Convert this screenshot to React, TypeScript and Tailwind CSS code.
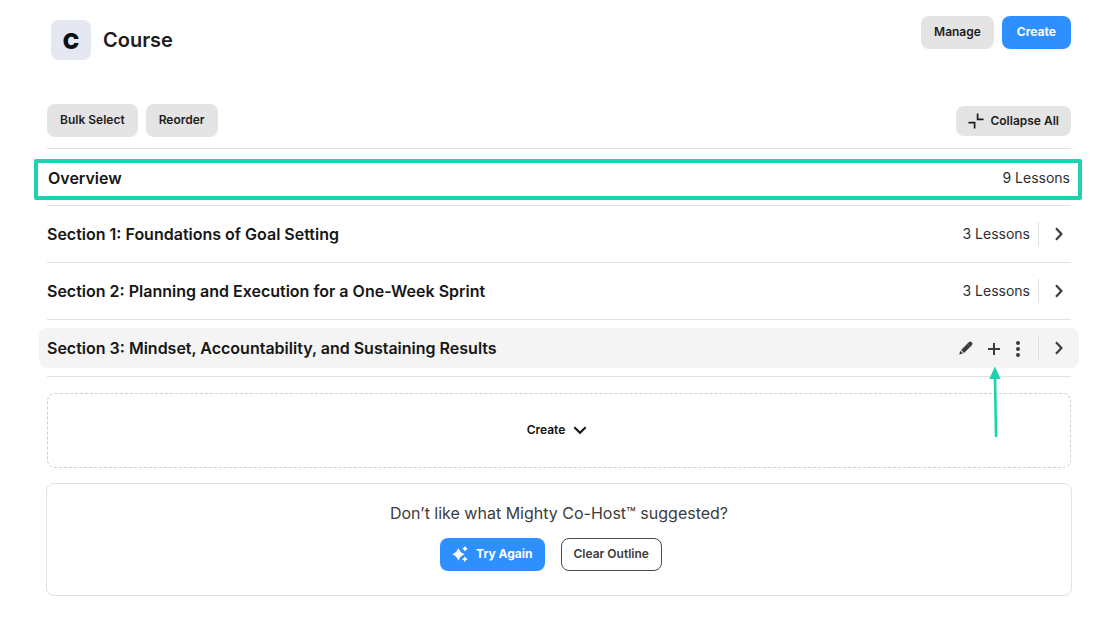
import React from "react";

const grayButton =
  "flex items-center justify-center rounded-lg bg-[#e4e4e4] text-xs font-semibold text-[#1c1c1c]";

function ChevronRight() {
  return (
    <svg viewBox="0 0 24 24" className="size-6" fill="none" stroke="#3c3c3c" strokeWidth="2.2" aria-hidden="true">
      <path d="M9 6.3l5.4 5.7L9 17.7" />
    </svg>
  );
}

function OpenButton({ label }: { label: string }) {
  return (
    <div className="ml-2 flex h-6 w-[33px] items-center justify-end border-l border-[#e0e0e0]">
      <button type="button" aria-label={label} className="size-6">
        <ChevronRight />
      </button>
    </div>
  );
}

const rowClass = "border-b border-[#e2e2e2] py-2";
const titleClass = "text-base font-semibold text-[#161616]";
const countClass = "text-sm text-[#2e2e2e]";

function SectionRow({ title, count }: { title: string; count: string }) {
  return (
    <li className={rowClass}>
      <div className="flex h-10 items-center">
        <h2 className={titleClass}>{title}</h2>
        <span className={`ml-auto ${countClass}`}>{count}</span>
        <OpenButton label={`Open ${title}`} />
      </div>
    </li>
  );
}

function ActiveSectionRow({ title }: { title: string }) {
  return (
    <li className={rowClass}>
      <div className="-mx-2 flex h-10 items-center rounded-lg bg-[#f4f4f4] px-2">
        <h2 className={titleClass}>{title}</h2>
        <div className="ml-auto flex items-center">
          <button type="button" aria-label="Edit" className="mr-1 size-6">
            <svg viewBox="0 0 24 24" className="size-6" fill="#3c3c3c" aria-hidden="true">
              <path d="M5.2 18.6l1.1-3.9 2.8 2.8z" />
              <path d="M8.4 15.7L15.8 8.2" stroke="#3c3c3c" strokeWidth="4.2" />
              <path d="M15.8 8.2l.5-.4" stroke="#3c3c3c" strokeWidth="4.2" strokeLinecap="round" />
              <path d="M6.6 13.9l3.4 3.4" stroke="#f4f4f4" strokeWidth=".7" />
              <path d="M13.4 7.8l2.8 2.8" stroke="#f4f4f4" strokeWidth=".4" opacity=".6" />
            </svg>
          </button>
          <div className="relative size-6">
            <button type="button" aria-label="Add" className="size-6">
              <svg viewBox="0 0 24 24" className="size-6" fill="none" stroke="#3c3c3c" strokeWidth="2" aria-hidden="true">
                <path d="M12 7v12M6 13h12" />
              </svg>
            </button>
            <svg viewBox="0 0 24 72" className="pointer-events-none absolute top-[30px] left-0 h-[72px] w-6" aria-hidden="true">
              <path d="M13 12L14 70" stroke="#1dd2ae" strokeWidth="2.6" strokeLinecap="round" />
              <path d="M12.9 .5L18.5 13H7.2z" fill="#1dd2ae" />
            </svg>
          </div>
          <button type="button" aria-label="More options" className="size-6">
            <svg viewBox="0 0 24 24" className="size-6" fill="#3c3c3c" aria-hidden="true">
              <circle cx="12" cy="7" r="2" />
              <circle cx="12" cy="13" r="2" />
              <circle cx="12" cy="19" r="2" />
            </svg>
          </button>
        </div>
        <OpenButton label={`Open ${title}`} />
      </div>
    </li>
  );
}

export default function App() {
  return (
    <div className="min-h-screen bg-white pt-4 pr-[43px] pb-6 pl-[47px] font-['Inter','Liberation_Sans',sans-serif]">
      <header className="flex items-start justify-between">
        <div className="flex items-center gap-3 pt-1 pl-1">
          <div className="flex size-10 items-center justify-center rounded-lg bg-[#e5e8f1] pt-0.5 text-[22px] font-black text-[#0d1117]">
            C
          </div>
          <h1 className="text-xl font-semibold text-[#1c1c1c]">Course</h1>
        </div>
        <div className="flex gap-2">
          <button type="button" className={`${grayButton} h-[33px] px-[13px] pb-0.5`}>Manage</button>
          <button
            type="button"
            className="h-[33px] rounded-lg bg-[#2e90ff] px-[15px] pb-0.5 text-xs font-bold text-white"
          >
            Create
          </button>
        </div>
      </header>

      <main>
        <div className="mt-11 flex items-center justify-between border-b border-[#e2e2e2] pb-[11px]">
          <div className="flex gap-2">
            <button type="button" className={`${grayButton} h-[33px] px-[13px] pb-0.5`}>Bulk Select</button>
            <button type="button" className={`${grayButton} h-[33px] px-[13px] pb-0.5`}>Reorder</button>
          </div>
          <button type="button" className={`${grayButton} h-[30px] gap-1.5 px-3`}>
            <svg viewBox="0 0 16 16" className="size-4" fill="none" stroke="#1c1c1c" strokeWidth="1.7" aria-hidden="true">
              <path d="M9.6 .6v5.8h6M.4 9.6h6.2v6" />
            </svg>
            Collapse All
          </button>
        </div>

        <ul>
          <li className={`relative ${rowClass}`}>
            <div className="flex h-10 items-center justify-between px-px pt-0.5">
              <h2 className={titleClass}>Overview</h2>
              <span className={countClass}>9 Lessons</span>
            </div>
            <div className="pointer-events-none absolute -right-[11px] -left-[13px] top-2.5 h-[41px] rounded-xs border-4 border-[#1dd2ae]" />
          </li>
          <SectionRow title="Section 1: Foundations of Goal Setting" count="3 Lessons" />
          <SectionRow title="Section 2: Planning and Execution for a One-Week Sprint" count="3 Lessons" />
          <ActiveSectionRow title="Section 3: Mindset, Accountability, and Sustaining Results" />
        </ul>

        <button
          type="button"
          className="mt-4 flex h-[75px] w-full items-center justify-center gap-2 rounded-lg border border-dashed border-[#cfcfcf] pr-1 pb-0.5 text-xs font-semibold text-[#111111]"
        >
          Create
          <svg viewBox="0 0 14 14" className="size-3.5" fill="none" stroke="#111111" strokeWidth="2" aria-hidden="true">
            <path d="M1.3 4.2L7 9.8l5.7-5.6" />
          </svg>
        </button>

        <section className="-mx-px mt-[15px] flex h-[113px] flex-col items-center rounded-lg border border-[#e2e2e2] pt-[17px]">
          <p className="text-base text-[#3c3c3c]">Don’t like what Mighty Co-Host™ suggested?</p>
          <div className="mt-[13px] flex gap-4 pr-4">
            <button
              type="button"
              className="flex h-[33px] items-center gap-2 rounded-lg bg-[#2e90ff] px-3 pb-0.5 text-xs font-bold text-white"
            >
              <svg viewBox="0 0 16 16" className="size-4" fill="white" aria-hidden="true">
                <path d="M6.4 2Q8 6.7 12.6 8.3Q8 9.9 6.4 14.6Q4.8 9.9 .2 8.3Q4.8 6.7 6.4 2z" />
                <path d="M13 0Q13.7 1.9 15.8 2.7Q13.7 3.5 13 5.4Q12.3 3.5 10.2 2.7Q12.3 1.9 13 0z" />
                <path d="M12.8 10.5Q13.5 12.4 15.6 13.2Q13.5 14 12.8 15.9Q12.1 14 10 13.2Q12.1 12.4 12.8 10.5z" />
              </svg>
              Try Again
            </button>
            <button
              type="button"
              className="h-[33px] rounded-lg border border-[#4a4a4a] px-3 pb-0.5 text-xs font-semibold text-[#3c3c3c]"
            >
              Clear Outline
            </button>
          </div>
        </section>
      </main>
    </div>
  );
}
